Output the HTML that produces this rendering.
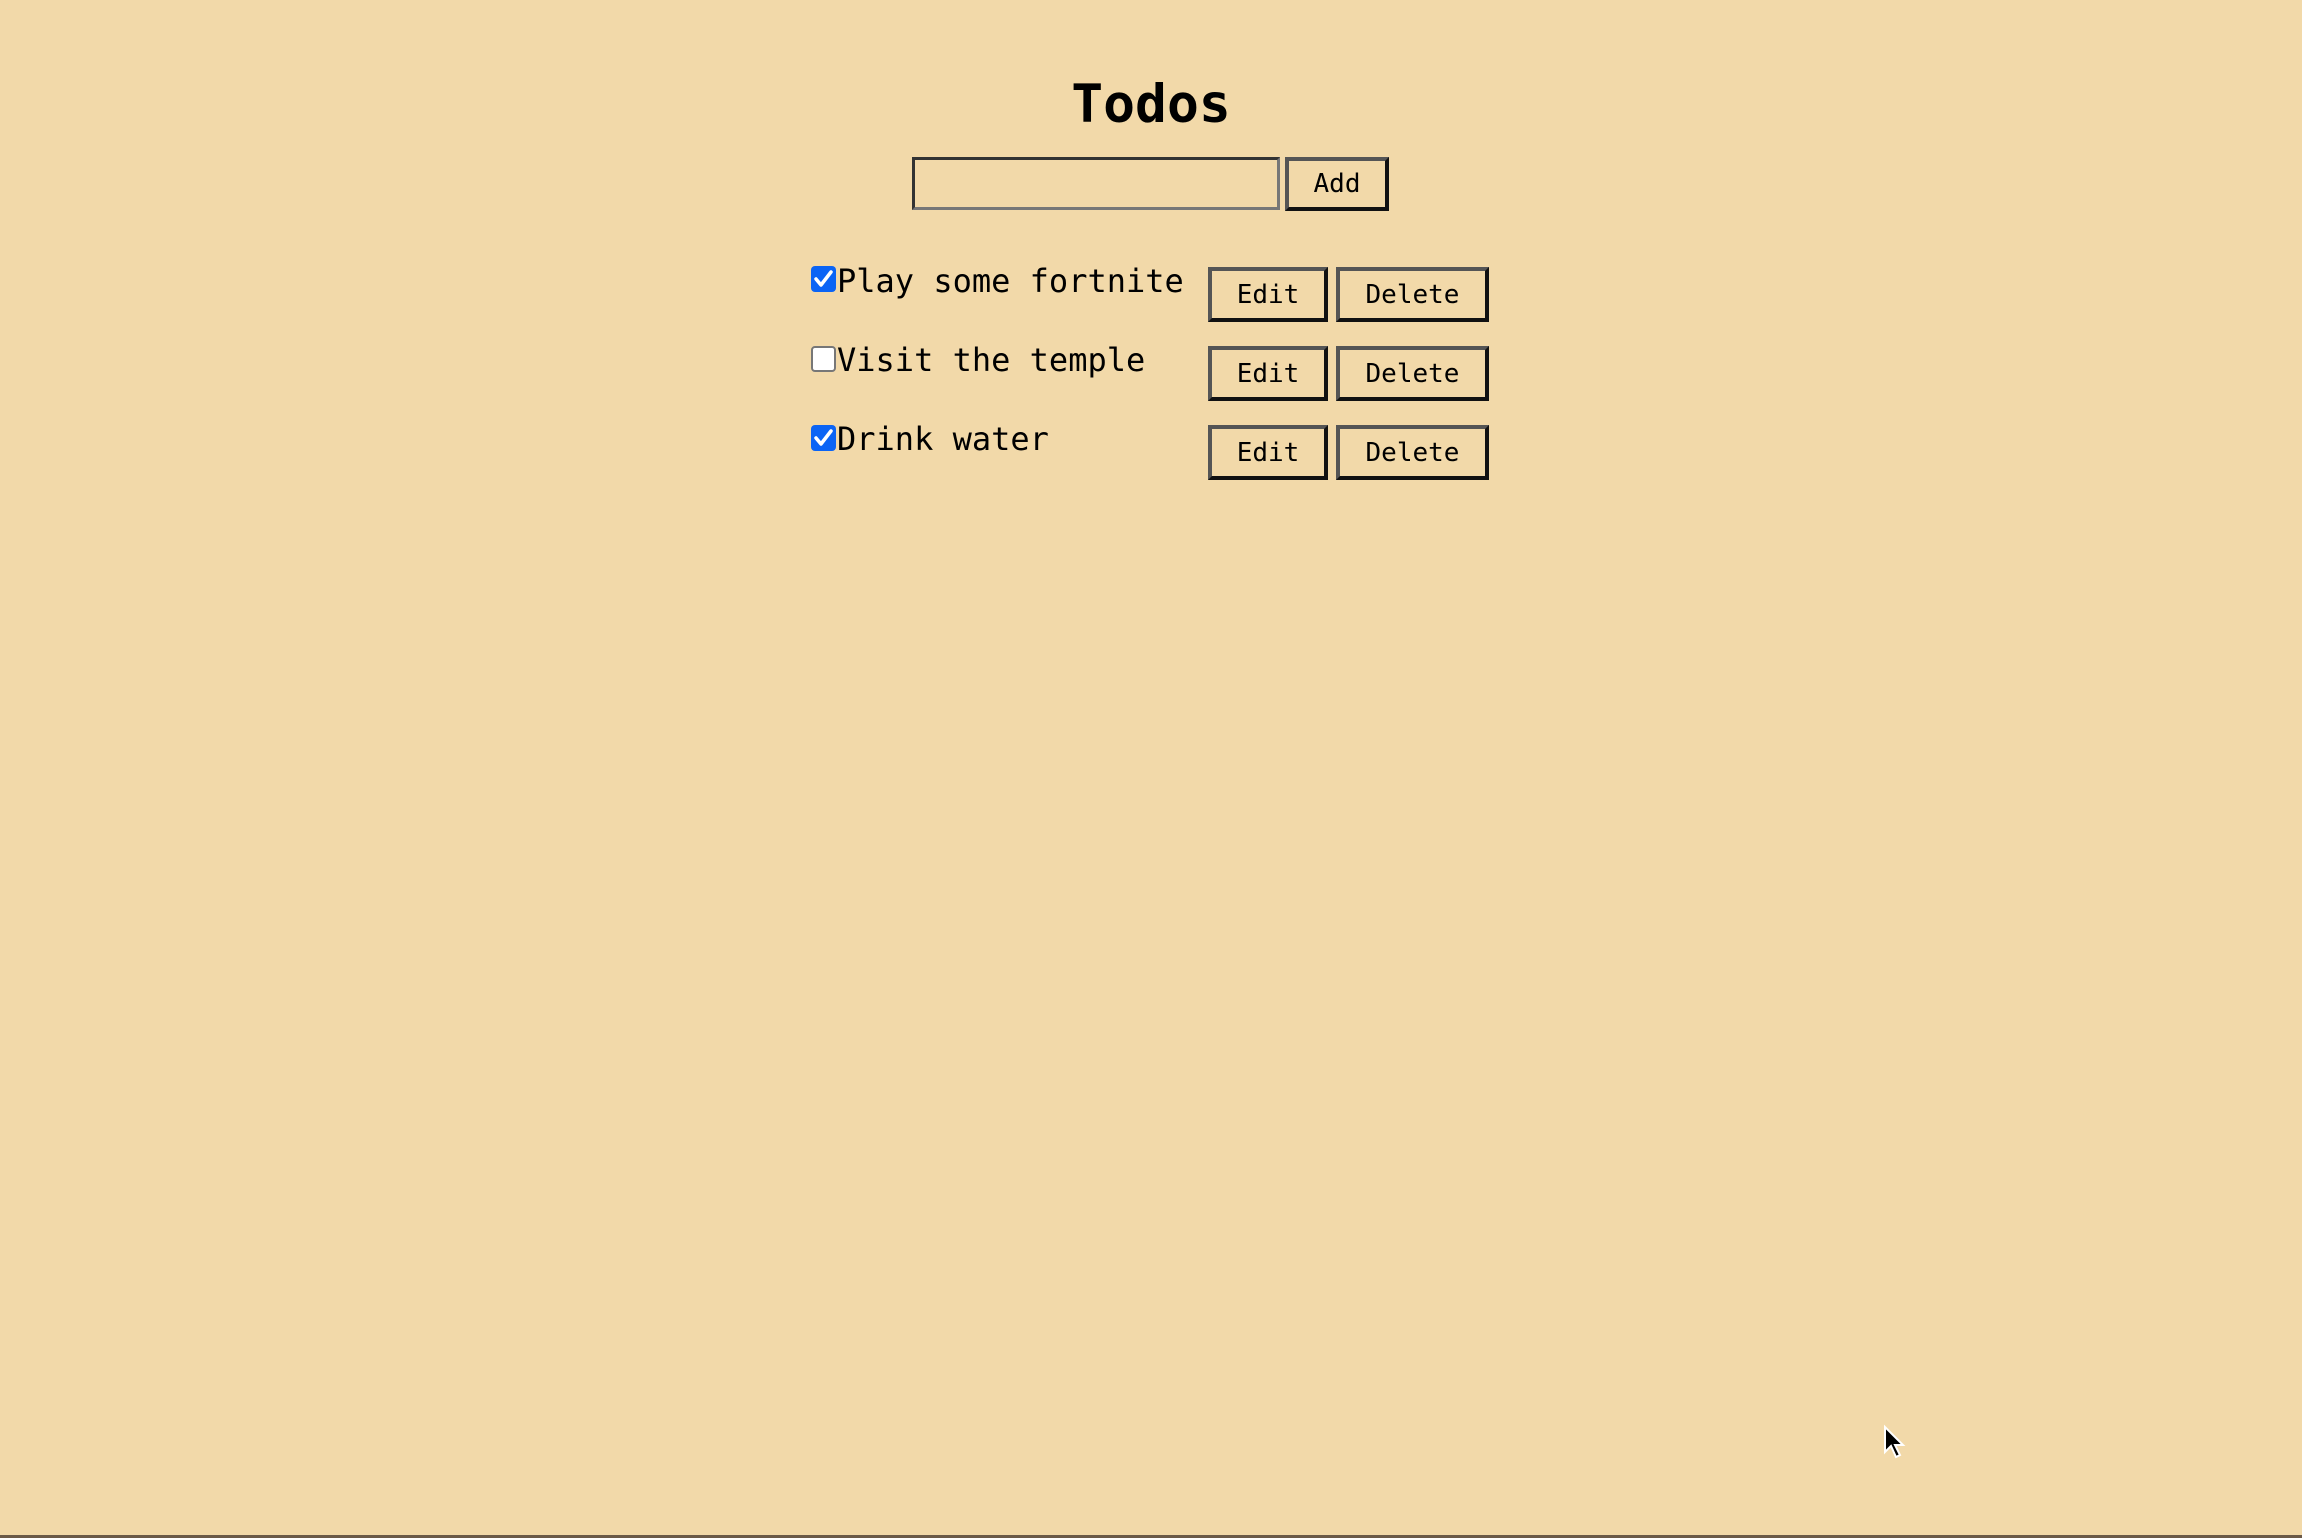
<!DOCTYPE html>
<html><head><meta charset="utf-8"><style>
html,body{margin:0;padding:0;width:2302px;height:1538px;overflow:hidden;background:#f2d9a9;font-family:"DejaVu Sans Mono","Liberation Mono",monospace;color:#000}
.a{position:absolute}
h1{position:absolute;margin:0;left:0;width:2302px;text-align:center;top:70px;font-size:53px;line-height:70px;font-weight:bold;padding-left:0}
.inp{left:912px;top:157px;width:362px;height:47px;border:3px solid;border-color:#333 #777 #777 #333;box-sizing:content-box}
.btn{box-sizing:border-box;border:4px solid;border-color:#555 #111 #111 #555;font-size:26px;display:flex;align-items:center;justify-content:center;height:55px}
.cb{width:25px;height:26px;border-radius:4px;box-sizing:border-box}
.on{background:#0b64f5}
.off{background:#fff;border:2px solid #777}
.t{font-size:32px;line-height:40px}
.bottom{left:0;top:1535px;width:2302px;height:3px;background:#6b5a48}
</style></head><body>
<h1>Todos</h1>
<div class="a inp"></div>
<div class="a btn" style="left:1285px;top:157px;width:104px;height:54px">Add</div>

<div class="a cb on" style="left:811px;top:266px"><svg width="25" height="26" viewBox="0 0 25 26"><path d="M5 13 L10 19 L20 6" stroke="#fff" stroke-width="3.5" fill="none" stroke-linecap="round" stroke-linejoin="round"/></svg></div>
<div class="a t" style="left:837px;top:261px">Play some fortnite</div>
<div class="a btn" style="left:1208px;top:267px;width:120px">Edit</div>
<div class="a btn" style="left:1336px;top:267px;width:153px">Delete</div>

<div class="a cb off" style="left:811px;top:346px"></div>
<div class="a t" style="left:837px;top:340px">Visit the temple</div>
<div class="a btn" style="left:1208px;top:346px;width:120px">Edit</div>
<div class="a btn" style="left:1336px;top:346px;width:153px">Delete</div>

<div class="a cb on" style="left:811px;top:425px"><svg width="25" height="26" viewBox="0 0 25 26"><path d="M5 13 L10 19 L20 6" stroke="#fff" stroke-width="3.5" fill="none" stroke-linecap="round" stroke-linejoin="round"/></svg></div>
<div class="a t" style="left:837px;top:419px">Drink water</div>
<div class="a btn" style="left:1208px;top:425px;width:120px">Edit</div>
<div class="a btn" style="left:1336px;top:425px;width:153px">Delete</div>

<svg class="a" style="left:1880px;top:1422px" width="30" height="40" viewBox="0 0 30 40"><path d="M5 5 L5 30 L11 24 L16 35 L20 33 L15 23 L23 23 Z" fill="#000" stroke="#fff" stroke-width="2"/></svg>
<div class="a bottom"></div>
</body></html>
